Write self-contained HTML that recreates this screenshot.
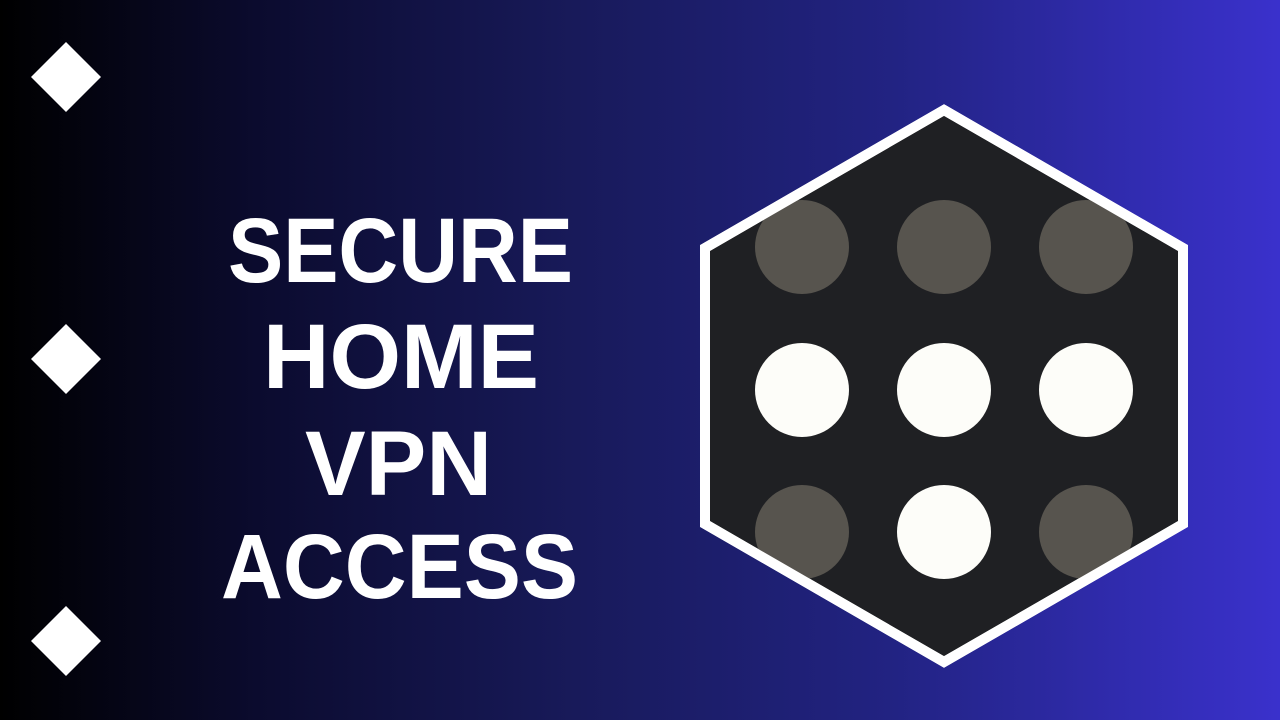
<!DOCTYPE html>
<html><head><style>
html,body{margin:0;padding:0;width:1280px;height:720px;overflow:hidden}
body{background:linear-gradient(90deg,#000 0%,#0b0b2e 20%,#181a5a 45%,#222383 70%,#3a31cc 100%)}
svg{position:absolute;left:0;top:0}
</style></head><body>
<svg width="1280" height="720" viewBox="0 0 1280 720">
<defs><clipPath id="h"><polygon points="944,110 1183,248 1183,524 944,662 705,524 705,248"/></clipPath></defs>
<g fill="#fff">
<polygon points="66,42 101,77 66,112 31,77"/>
<polygon points="66,324 101,359 66,394 31,359"/>
<polygon points="66,606 101,641 66,676 31,641"/>
</g>
<g font-family="Liberation Sans, sans-serif" font-weight="bold" font-size="92" fill="#fff" text-anchor="start">
<text x="228" y="282" textLength="345" lengthAdjust="spacingAndGlyphs">SECURE</text>
<text x="263" y="388" textLength="276" lengthAdjust="spacingAndGlyphs">HOME</text>
<text x="305" y="495" textLength="187" lengthAdjust="spacingAndGlyphs">VPN</text>
<text x="221" y="598" textLength="357" lengthAdjust="spacingAndGlyphs">ACCESS</text>
</g>
<polygon points="944,110 1183,248 1183,524 944,662 705,524 705,248" fill="#1f2023" stroke="#fff" stroke-width="10" stroke-linejoin="miter"/>
<g clip-path="url(#h)">
<g fill="#57544e">
<circle cx="802" cy="247" r="47"/><circle cx="944" cy="247" r="47"/><circle cx="1086" cy="247" r="47"/>
<circle cx="802" cy="532" r="47"/><circle cx="1086" cy="532" r="47"/>
</g>
<g fill="#fdfdf9">
<circle cx="802" cy="390" r="47"/><circle cx="944" cy="390" r="47"/><circle cx="1086" cy="390" r="47"/>
<circle cx="944" cy="532" r="47"/>
</g>
</g>
<polygon points="944,110 1183,248 1183,524 944,662 705,524 705,248" fill="none" stroke="#fff" stroke-width="10"/>
</svg>
</body></html>
